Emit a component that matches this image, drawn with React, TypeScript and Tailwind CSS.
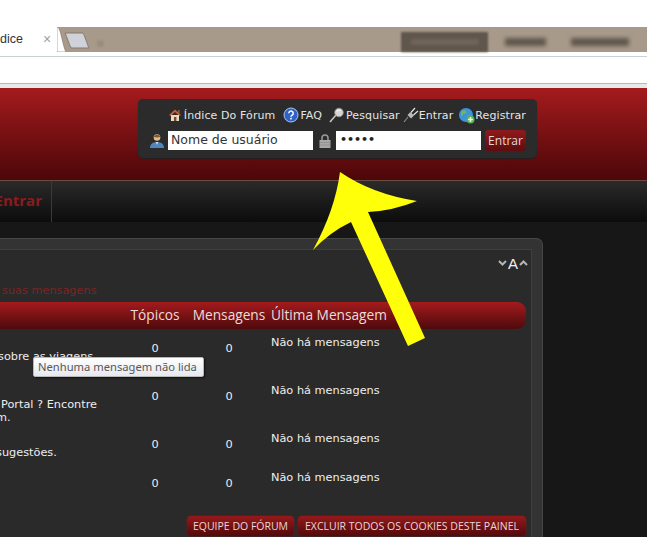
const rows = [
  { desc: [{ text: "sobre as viagens", indent: "-ml-[2px]" }], height: "h-[48px]" },
  {
    desc: [
      { text: "Portal ? Encontre", indent: "ml-[1px]" },
      { text: "m.", indent: "-ml-[4px]" },
    ],
    height: "h-[48px]",
  },
  { desc: [{ text: "sugestões.", indent: "-ml-[4px]" }], height: "h-[39px]" },
  { desc: [], height: "h-[45px]" },
];

function HouseIcon() {
  return (
    <svg width="14" height="14" viewBox="0 0 14 14" className="shrink-0">
      <path d="M1 7 7 1.500 13 7 11.500 8 7 4 2.500 8Z" fill="#c9603a" />
      <rect x="3" y="7" width="8" height="6" fill="#e8dcc0" />
      <rect x="6" y="9" width="2.400" height="4" fill="#7a4a2a" />
      <rect x="10" y="2" width="1.600" height="3" fill="#8a5a3a" />
    </svg>
  );
}

function HelpIcon() {
  return (
    <svg width="16" height="16" viewBox="0 0 16 16" className="shrink-0">
      <circle cx="8" cy="8" r="7" fill="#2f62c4" stroke="#a9c6f0" strokeWidth="1" />
      <path d="M5.800 6.200a2.200 2.200 0 1 1 3.400 1.900c-.8.5-1.200.9-1.200 1.700" fill="none" stroke="#fff" strokeWidth="1.500" />
      <rect x="7.200" y="10.800" width="1.600" height="1.600" fill="#fff" />
    </svg>
  );
}

function SearchIcon() {
  return (
    <svg width="16" height="16" viewBox="0 0 16 16" className="shrink-0">
      <path d="M1 15 7 8" stroke="#c8c8c8" strokeWidth="1.500" />
      <circle cx="10" cy="5.500" r="4.300" fill="#d8d4d0" stroke="#8f8f8f" strokeWidth="0.800" />
      <path d="M7.500 4.500a3 3 0 0 1 4-1" stroke="#fff" strokeWidth="1" fill="none" />
    </svg>
  );
}

function PlugIcon() {
  return (
    <svg width="16" height="16" viewBox="0 0 16 16" className="shrink-0">
      <path d="M1 15 5 10" stroke="#8d8d8d" strokeWidth="1.200" />
      <path d="M4.500 8 8 11.500 11 8.500 7.500 5Z" fill="#b9b9b9" />
      <path d="M8 5.500 12 1M10.500 8 15 4" stroke="#e2e2e2" strokeWidth="1.200" />
    </svg>
  );
}

function GlobeIcon() {
  return (
    <svg width="17" height="17" viewBox="0 0 17 17" className="shrink-0">
      <circle cx="8" cy="8" r="7" fill="#3f93d8" />
      <path d="M3 5c2-2 4-2 5-1s0 3-2 3-1 3-3 2ZM9 10c1-2 3-2 5-1-1 3-3 5-5 4Z" fill="#6fb55a" />
      <circle cx="12.500" cy="12.500" r="4" fill="#58b058" />
      <path d="M12.500 10v5M10 12.500h5" stroke="#e8f5e8" strokeWidth="1.600" />
    </svg>
  );
}

function UserIcon() {
  return (
    <svg width="14" height="15" viewBox="0 0 14 15" className="shrink-0">
      <circle cx="7" cy="4.500" r="3.300" fill="#e6b98d" />
      <path d="M3.700 4c.4-3 6.200-3 6.600 0-2 .6-4.600.6-6.600 0Z" fill="#7a5a34" />
      <path d="M0 15c0-4 3-6 7-6s7 2 7 6Z" fill="#4f86bd" />
      <path d="M6 9h2l-1 3Z" fill="#f0f0f0" />
    </svg>
  );
}

function LockIcon() {
  return (
    <svg width="12" height="14" viewBox="0 0 12 14" className="shrink-0">
      <path d="M3 6V4a3 3 0 0 1 6 0v2" fill="none" stroke="#9a9a9a" strokeWidth="1.500" />
      <rect x="0.500" y="6" width="11" height="8" fill="#a8a8a8" />
      <path d="M1 8.500h10M1 11h10" stroke="#868686" strokeWidth="0.700" />
    </svg>
  );
}

function BrowserChrome() {
  return (
    <div className="shrink-0">
      <div className="h-[27px] bg-white" />
      <div className="flex h-[25px] items-start bg-[#a89a8b]">
        <div className="flex h-[25px] w-[57px] items-center bg-white pb-[1px] font-['Liberation_Sans',sans-serif] text-[12.500px] text-[#333]">
          <span>dice</span>
          <span className="ml-[20px] text-[14px] leading-none text-[#a0a0a0]">×</span>
        </div>
        <svg width="10" height="25" viewBox="0 0 10 25" className="shrink-0">
          <path d="M0 0H1C4 3 6 20 9 25H0Z" fill="#fff" stroke="#7f7264" strokeWidth="0.600" />
        </svg>
        <svg width="26" height="18" viewBox="0 0 26 18" className="mt-[5px] -ml-[3px] shrink-0">
          <path d="M1 1H19C21 4 23 12 25 16H7C5 12 3 5 1 1Z" fill="#cfd2d8" stroke="#85796c" />
        </svg>
        <div className="mt-[13px] ml-[7px] size-[7px] rounded-full bg-[#9a8c7d] blur-[1px]" />
        <div className="mt-[5px] ml-[297px] flex h-[20px] w-[87px] items-center justify-center bg-[#5f564c] blur-[1px]">
          <div className="h-[6px] w-[68px] bg-[#6f655a] blur-[1px]" />
        </div>
        <div className="mt-[11px] ml-[17px] h-[8px] w-[41px] bg-[#5f564c] blur-[2px]" />
        <div className="mt-[11px] ml-[25px] h-[8px] w-[58px] bg-[#5f564c] blur-[2px]" />
      </div>
      <div className="h-[4px] bg-white" />
      <div className="h-[27px] border-t border-[#c8d2d2] bg-white" />
      <div className="h-[5px] border-t border-[#b5bab5] bg-[#e9e9e9]" />
    </div>
  );
}

function LoginBox() {
  return (
    <div className="flex h-[59px] w-[399px] flex-col rounded-[5px] bg-[#2b2b2b] pr-[11px] text-[#e4e4e4] shadow-[0_1px_1px_#222]">
      <div className="mt-[8px] flex h-[16px] items-center justify-end text-[11px] leading-none tracking-[0.1px]">
        <HouseIcon />
        <span className="ml-[2px]">Índice Do Fórum</span>
        <span className="ml-[8px]"><HelpIcon /></span>
        <span className="ml-[1px]">FAQ</span>
        <span className="ml-[7px]"><SearchIcon /></span>
        <span className="ml-[1px]">Pesquisar</span>
        <span className="ml-[3px]"><PlugIcon /></span>
        <span>Entrar</span>
        <span className="ml-[5px]"><GlobeIcon /></span>
        <span>Registrar</span>
      </div>
      <div className="mt-[7px] flex h-[21px] items-center">
        <span className="ml-[12px]"><UserIcon /></span>
        <div className="ml-[4px] flex h-[19px] w-[145px] items-center bg-white pl-[3px] text-[12.500px] text-[#333]">
          Nome de usuário
        </div>
        <span className="ml-[6px]"><LockIcon /></span>
        <div className="ml-[5px] flex h-[19px] w-[145px] items-center bg-white pl-[4px] text-[11px] font-bold text-[#222]">
          •••••
        </div>
        <div className="ml-[4px] flex h-[21px] w-[41px] items-center justify-center rounded-[3px] bg-gradient-to-b from-[#8f1a1c] to-[#5e0d0f] font-['Open_Sans',sans-serif] text-[12px] text-[#e6d8d8]">
          Entrar
        </div>
      </div>
    </div>
  );
}

function Panel() {
  return (
    <div className="w-[543px] rounded-tr-[7px] border-t border-r border-[#474747] bg-[#333333] pt-[10px] pr-[10px]">
      <div className="h-[290px] border-t border-r border-[#3f3f3f] bg-[#2a2a2a] pr-[5px] text-[11.300px] text-[#eeeeee]">
        <div className="-mr-[2px] flex h-[24px] items-center justify-end pt-[2px] text-[#bdbdbd]">
          <svg width="9" height="6" viewBox="0 0 9 6">
            <path d="M1 1 4.500 4.500 8 1" fill="none" stroke="#b5b5b5" strokeWidth="2" />
          </svg>
          <span className="px-[1px] font-['Liberation_Sans',sans-serif] text-[15px] leading-none text-[#f0f0f0]">A</span>
          <svg width="9" height="6" viewBox="0 0 9 6">
            <path d="M1 5 4.500 1.500 8 5" fill="none" stroke="#b5b5b5" strokeWidth="2" />
          </svg>
        </div>
        <div className="mt-[10px] h-[18px] pl-[2px] leading-[14px] text-[#7a2525]">suas mensagens</div>
        <div className="grid h-[27px] grid-cols-[118px_74px_74px_1fr] items-center rounded-r-[9px] bg-gradient-to-b from-[#a51b1d] to-[#4f0a0c] pb-[2px] font-['Open_Sans',sans-serif] text-[13.700px] leading-none text-[#ecdcdc]">
          <span />
          <span className="text-center">Tópicos</span>
          <span className="text-center whitespace-nowrap">Mensagens</span>
          <span className="pl-[5px] whitespace-nowrap">Última Mensagem</span>
        </div>
        <div className="mt-[7px]">
          {rows.map((row, i) => (
            <div className={`grid grid-cols-[118px_74px_74px_1fr] leading-[13px] ${row.height}`} key={i}>
              <div className="pt-[14px] whitespace-nowrap">
                {row.desc.map((line) => (
                  <div className={line.indent} key={line.text}>{line.text}</div>
                ))}
              </div>
              <div className="pt-[6px] text-center">0</div>
              <div className="pt-[6px] text-center">0</div>
              <div className="pl-[5px]">Não há mensagens</div>
            </div>
          ))}
        </div>
        <div className="flex justify-end gap-[4px] font-['Open_Sans',sans-serif] text-[10.500px] leading-none text-[#e8d8d8]">
          <div className="flex h-[20px] w-[107px] items-center justify-center rounded-[4px] bg-gradient-to-b from-[#96191b] to-[#520a0c] shadow-[0_0_2px_#8d1315]">
            EQUIPE DO FÓRUM
          </div>
          <div className="flex h-[20px] w-[228px] items-center justify-center rounded-[4px] bg-gradient-to-b from-[#96191b] to-[#520a0c] shadow-[0_0_2px_#8d1315]">
            EXCLUIR TODOS OS COOKIES DESTE PAINEL
          </div>
        </div>
      </div>
    </div>
  );
}

export default function App() {
  return (
    <div className="relative flex h-[537px] w-[647px] flex-col overflow-hidden bg-[#171717] font-['DejaVu_Sans',sans-serif]">
      <BrowserChrome />

      <div className="h-[92px] shrink-0 bg-gradient-to-b from-[#a51b1d] to-[#4d0709] pt-[11px] pl-[138px]">
        <LoginBox />
      </div>

      <div className="flex h-[42px] shrink-0 border-t border-[#6b4a40] bg-gradient-to-b from-[#2b2b2b] to-[#0c0c0c]">
        <div className="flex w-[52px] items-center justify-end border-r border-[#3a3a3a] pr-[9px] pb-[2px] font-['Open_Sans',sans-serif] text-[15px] font-bold text-[#8f1a1c]">
          Entrar
        </div>
      </div>

      <div className="flex-1 pt-[16px]">
        <Panel />
      </div>

      <div className="absolute top-[357px] left-[33px] flex h-[20px] w-[171px] items-center rounded-[2px] border border-[#b8b8b8] bg-gradient-to-b from-white to-[#e6e8ee] pl-[4px] font-['Noto_Sans',sans-serif] text-[11.200px] whitespace-nowrap text-[#575757] shadow-[1px_1px_2px_#111]">
        Nenhuma mensagem não lida
      </div>

      <svg width="647" height="537" viewBox="0 0 647 537" className="pointer-events-none absolute top-0 left-0">
        <path
          d="M340 172Q372 194 417 201Q392 211 368 212L425 338L408 346L351 222Q330 232 313 250Q335 210 340 172Z"
          fill="#ffff0a"
        />
      </svg>
    </div>
  );
}
